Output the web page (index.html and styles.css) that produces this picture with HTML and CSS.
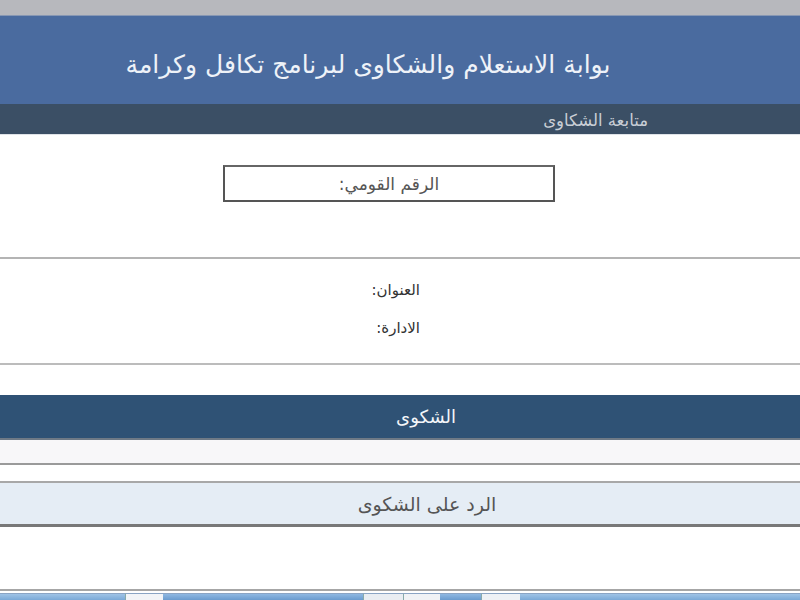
FILE: index.html
```html
<!DOCTYPE html>
<html lang="ar" dir="rtl">
<head>
<meta charset="utf-8">
<title>بوابة الاستعلام والشكاوى</title>
<link rel="stylesheet" href="styles.css">
</head>
<body>
<div class="topbar"></div>
<header class="header">
  <h1 class="title">بوابة الاستعلام والشكاوى لبرنامج تكافل وكرامة</h1>
</header>
<nav class="subnav"><span class="subnav-item">متابعة الشكاوى</span></nav>
<section class="id-section">
  <div class="id-box">الرقم القومي:</div>
</section>
<section class="info">
  <div class="info-row">العنوان:</div>
  <div class="info-row">الادارة:</div>
</section>
<div class="spacer"></div>
<div class="complaint-head">الشكوى</div>
<div class="complaint-body"></div>
<div class="gap"></div>
<div class="reply-head">الرد على الشكوى</div>
<div class="reply-body"></div>
<div class="taskbar">
  <span class="tb tb-a"></span>
  <span class="tb tb-b"></span>
  <span class="tb tb-c"></span>
  <span class="tb tb-d"></span>
  <span class="tb tb-b2"></span>
  <span class="tb tb-c2"></span>
  <span class="tb tb-d2"></span>
  <span class="tb tb-e"></span>
</div>
</body>
</html>
```
FILE: styles.css
```css
html, body {
  margin: 0;
  padding: 0;
  background: #ffffff;
  font-family: "DejaVu Sans", "Noto Sans", sans-serif;
  overflow: hidden;
}
body {
  width: 800px;
  height: 600px;
}
.topbar {
  height: 15px;
  background: #b7b8bd;
  border-bottom: 1px solid #8797b3;
}
.header {
  height: 88px;
  background: #4a6b9f;
  display: flex;
  align-items: center;
  justify-content: center;
  padding-right: 64px;
  padding-top: 8px;
  box-sizing: border-box;
}
.title {
  margin: 0;
  font-weight: normal;
  font-size: 25px;
  color: #eef2f8;
  letter-spacing: -0.2px;
}
.subnav {
  height: 31px;
  background: #3b4f65;
  display: flex;
  align-items: center;
  padding-right: 152px;
  padding-top: 2px;
  box-sizing: border-box;
  border-bottom: 1px solid #dfe3e8;
}
.subnav-item {
  font-size: 16.5px;
  color: #c9ced6;
}
.id-section {
  height: 124px;
  box-sizing: border-box;
  padding-top: 30px;
  display: flex;
  justify-content: center;
  align-items: flex-start;
  padding-right: 22px;
  border-bottom: 2px solid #b4b4b4;
}
.id-box {
  width: 332px;
  height: 37px;
  box-sizing: border-box;
  border: 2px solid #555;
  border-top-color: #666;
  display: flex;
  align-items: center;
  justify-content: center;
  font-size: 17px;
  color: #555;
}
.info {
  height: 106px;
  box-sizing: border-box;
  padding-top: 21px;
  padding-right: 380px;
  border-bottom: 2px solid #bcbcbc;
  display: flex;
  flex-direction: column;
  gap: 18px;
}
.info-row {
  font-size: 15px;
  color: #333;
  line-height: 20px;
}
.spacer {
  height: 30px;
}
.complaint-head {
  height: 45px;
  box-sizing: border-box;
  background: #2f5275;
  color: #f4f6f9;
  font-size: 18px;
  display: flex;
  align-items: center;
  justify-content: center;
  padding-left: 52px;
  border-bottom: 2px solid #6f7a86;
}
.complaint-body {
  height: 25px;
  box-sizing: border-box;
  background: #f8f7f9;
  border-bottom: 2px solid #9a9a9a;
}
.gap {
  height: 18px;
  box-sizing: border-box;
  border-bottom: 2px solid #a8a8a8;
}
.reply-head {
  height: 44px;
  box-sizing: border-box;
  background: #e5edf5;
  color: #555;
  font-size: 19px;
  display: flex;
  align-items: center;
  justify-content: center;
  padding-left: 54px;
  border-bottom: 3px solid #787878;
}
.reply-body {
  height: 64px;
  box-sizing: border-box;
  border-bottom: 2px solid #a6a6a6;
}
.taskbar {
  height: 9px;
  margin-top: 2px;
  display: flex;
  direction: ltr;
}
.tb {
  display: block;
  height: 100%;
  border-top: 1px solid #8aa4c4;
  box-sizing: border-box;
}
.tb-a { width: 125px; background: linear-gradient(#9fc3e6, #6fa0d2); }
.tb-b { width: 38px; background: #f2f4f7; border-left: 1px solid #8aa; }
.tb-c { width: 200px; background: linear-gradient(#8fb8e2, #5f92c8); }
.tb-d { width: 40px; background: #e9edf2; border-left: 1px solid #8aa; }
.tb-b2 { width: 37px; background: #f0f2f5; border-left: 1px solid #8aa; }
.tb-c2 { width: 41px; background: linear-gradient(#8fb8e2, #5f92c8); }
.tb-d2 { width: 39px; background: #eef1f5; border-left: 1px solid #8aa; }
.tb-e { flex: 1; background: linear-gradient(#9fc3e6, #6fa0d2); }
```
